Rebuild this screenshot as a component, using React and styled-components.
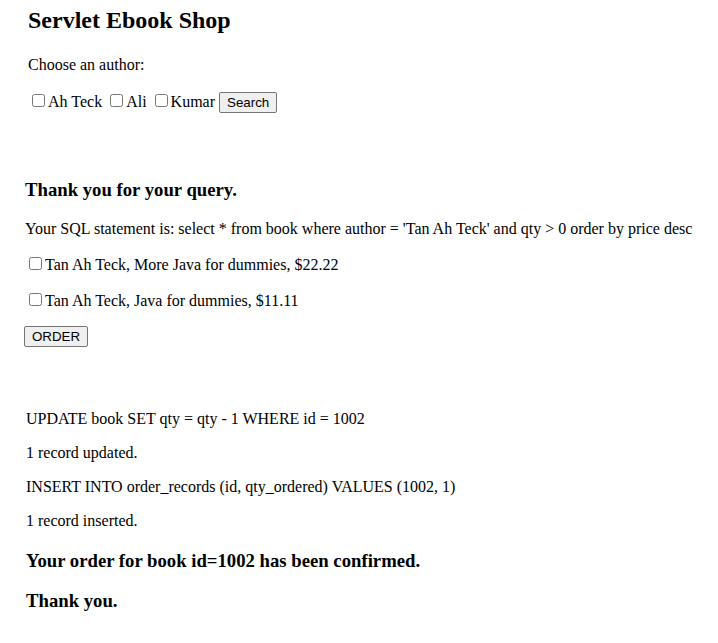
import React from "react";
import styled, { createGlobalStyle } from "styled-components";

const GlobalStyle = createGlobalStyle`
body {
  margin: 0;
  background: #ffffff;
  color: #000000;
  font-family: "Liberation Serif", "Times New Roman", serif;
  font-size: 16px;
}
`;

const authors = ["Ah Teck", "Ali", "Kumar"];

const books = [
  "Tan Ah Teck, More Java for dummies, $22.22",
  "Tan Ah Teck, Java for dummies, $11.11",
];

const log = [
  "UPDATE book SET qty = qty - 1 WHERE id = 1002",
  "1 record updated.",
  "INSERT INTO order_records (id, qty_ordered) VALUES (1002, 1)",
  "1 record inserted.",
];

const App = () => {
  return (
    <Page>
      <GlobalStyle />

      <Section top={7} left={28}>
        <Title>Servlet Ebook Shop</Title>
        <Para after={17}>Choose an author:</Para>
        <Para>
          {authors.map((a) => (
            <Choice key={a}>
              <Check type="checkbox" />
              {a}
            </Choice>
          ))}
          <Button>Search</Button>
        </Para>
      </Section>

      <Section top={50} left={25}>
        <SubTitle>Thank you for your query.</SubTitle>
        <Para>
          Your SQL statement is: select * from book where author = 'Tan Ah Teck' and qty &gt; 0 order by price desc
        </Para>
        {books.map((b) => (
          <Para key={b}>
            <Check type="checkbox" />
            {b}
          </Para>
        ))}
        <Para>
          <Button shift={-1}>ORDER</Button>
        </Para>
      </Section>

      <Section top={47} left={26}>
        {log.map((line) => (
          <Para key={line}>{line}</Para>
        ))}
        <SubTitle gap={20}>Your order for book id=1002 has been confirmed.</SubTitle>
        <SubTitle gap={16}>Thank you.</SubTitle>
      </Section>
    </Page>
  );
};

const Page = styled.div`
width: 718px;
min-height: 643px;
`;

const Section = styled.section`
display: flow-root;
padding: ${(props) => props.top}px 0 0 ${(props) => props.left}px;

& > :first-child {
  margin-top: 0;
}
`;

const Title = styled.h2`
margin: 0 0 22px;
font-size: 24px;
font-weight: bold;
`;

const SubTitle = styled.h3`
margin: ${(props) => props.gap || 18.72}px 0 18.72px;
font-size: 18.72px;
font-weight: bold;
`;

const Para = styled.p`
margin: 16px 0 ${(props) => props.after || 16}px;
white-space: nowrap;
`;

const Choice = styled.span`
margin-right: 4px;
`;

const Check = styled.input`
width: 13px;
height: 13px;
margin: 3px 3px 3px 4px;
vertical-align: baseline;
`;

const Button = styled.button`
margin-left: ${(props) => props.shift || 0}px;
font-family: Arial, "Liberation Sans", sans-serif;
font-size: 13.33px;
padding: 2px 7px;
color: #000000;
background-color: #efefef;
border: 1px solid #767676;
border-radius: 2px;
`;

export default App;
